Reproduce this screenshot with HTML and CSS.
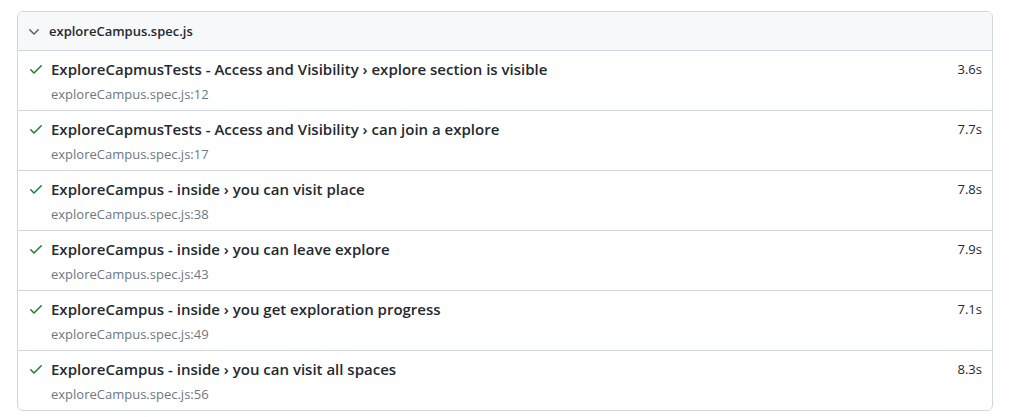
FILE: index.html
```
<!DOCTYPE html>
<html lang="en">
<head>
<meta charset="utf-8">
<title>Report</title>
<link rel="stylesheet" href="styles.css">
</head>
<body>
<div class="page">
  <div class="chip">
    <div class="chip-header">
      <svg class="chevron" viewBox="0 0 16 16" width="16" height="16"><path d="M12.78 6.22a.75.75 0 010 1.06l-4.25 4.250a.75.75 0 01-1.06 0L3.22 7.28a.75.75 0 011.06-1.06L8 9.94l3.72-3.72a.75.75 0 011.06 0z"/></svg>
      <span class="file-name">exploreCampus.spec.js</span>
    </div>
    <div class="chip-body">
      <div class="test">
        <div class="test-line">
          <svg class="check" viewBox="0 0 16 16" width="16" height="16"><path d="M13.78 4.22a.75.75 0 010 1.06l-7.25 7.25a.75.75 0 01-1.06 0L2.22 9.28a.75.75 0 011.06-1.06L6 10.94l6.72-6.72a.75.75 0 011.06 0z"/></svg>
          <span class="title">ExploreCapmusTests - Access and Visibility › explore section is visible</span>
          <span class="duration">3.6s</span>
        </div>
        <div class="details">exploreCampus.spec.js:12</div>
      </div>
      <div class="test">
        <div class="test-line">
          <svg class="check" viewBox="0 0 16 16" width="16" height="16"><path d="M13.78 4.22a.75.75 0 010 1.06l-7.25 7.25a.75.75 0 01-1.06 0L2.22 9.28a.75.75 0 011.06-1.06L6 10.94l6.72-6.72a.75.75 0 011.06 0z"/></svg>
          <span class="title">ExploreCapmusTests - Access and Visibility › can join a explore</span>
          <span class="duration">7.7s</span>
        </div>
        <div class="details">exploreCampus.spec.js:17</div>
      </div>
      <div class="test">
        <div class="test-line">
          <svg class="check" viewBox="0 0 16 16" width="16" height="16"><path d="M13.78 4.22a.75.75 0 010 1.06l-7.25 7.25a.75.75 0 01-1.06 0L2.22 9.28a.75.75 0 011.06-1.06L6 10.94l6.72-6.72a.75.75 0 011.06 0z"/></svg>
          <span class="title">ExploreCampus - inside › you can visit place</span>
          <span class="duration">7.8s</span>
        </div>
        <div class="details">exploreCampus.spec.js:38</div>
      </div>
      <div class="test">
        <div class="test-line">
          <svg class="check" viewBox="0 0 16 16" width="16" height="16"><path d="M13.78 4.22a.75.75 0 010 1.06l-7.25 7.25a.75.75 0 01-1.06 0L2.22 9.28a.75.75 0 011.06-1.06L6 10.94l6.72-6.72a.75.75 0 011.06 0z"/></svg>
          <span class="title">ExploreCampus - inside › you can leave explore</span>
          <span class="duration">7.9s</span>
        </div>
        <div class="details">exploreCampus.spec.js:43</div>
      </div>
      <div class="test">
        <div class="test-line">
          <svg class="check" viewBox="0 0 16 16" width="16" height="16"><path d="M13.78 4.22a.75.75 0 010 1.06l-7.25 7.25a.75.75 0 01-1.06 0L2.22 9.28a.75.75 0 011.06-1.06L6 10.94l6.72-6.72a.75.75 0 011.06 0z"/></svg>
          <span class="title">ExploreCampus - inside › you get exploration progress</span>
          <span class="duration">7.1s</span>
        </div>
        <div class="details">exploreCampus.spec.js:49</div>
      </div>
      <div class="test">
        <div class="test-line">
          <svg class="check" viewBox="0 0 16 16" width="16" height="16"><path d="M13.78 4.22a.75.75 0 010 1.06l-7.25 7.25a.75.75 0 01-1.06 0L2.22 9.28a.75.75 0 011.06-1.06L6 10.94l6.72-6.72a.75.75 0 011.06 0z"/></svg>
          <span class="title">ExploreCampus - inside › you can visit all spaces</span>
          <span class="duration">8.3s</span>
        </div>
        <div class="details">exploreCampus.spec.js:56</div>
      </div>
    </div>
  </div>
</div>
</body>
</html>
```
FILE: styles.css
```
body {
  margin: 0;
  background: #fff;
  font-family: "Open Sans", "Noto Sans", "Liberation Sans", sans-serif;
  color: #24292f;
}
.page {
  padding: 11px 29px 0 17px;
}
.chip {
  border: 1px solid #d0d7de;
  border-radius: 6px;
  overflow: hidden;
}
.chip-header {
  display: flex;
  align-items: center;
  height: 38px;
  padding: 0 8px;
  background: #f6f8fa;
  border-bottom: 1px solid #d0d7de;
}
.chevron {
  fill: #57606a;
  margin-right: 7px;
  flex: none;
}
.file-name {
  font-size: 13px;
  font-weight: 600;
  color: #24292f;
}
.test {
  padding: 2px 10px;
  border-bottom: 1px solid #d0d7de;
}
.test:last-child {
  border-bottom: none;
}
.test-line {
  display: flex;
  align-items: center;
  line-height: 32px;
}
.check {
  fill: #1a7f37;
  margin-right: 7px;
  flex: none;
}
.title {
  font-size: 15px;
  font-weight: 600;
  color: #24292f;
}
.duration {
  margin-left: auto;
  font-size: 13px;
  color: #24292f;
}
.details {
  margin-left: 15px;
  padding: 1px 0 6px 8px;
  line-height: 16px;
  font-size: 13px;
  color: #6e7781;
}
```
